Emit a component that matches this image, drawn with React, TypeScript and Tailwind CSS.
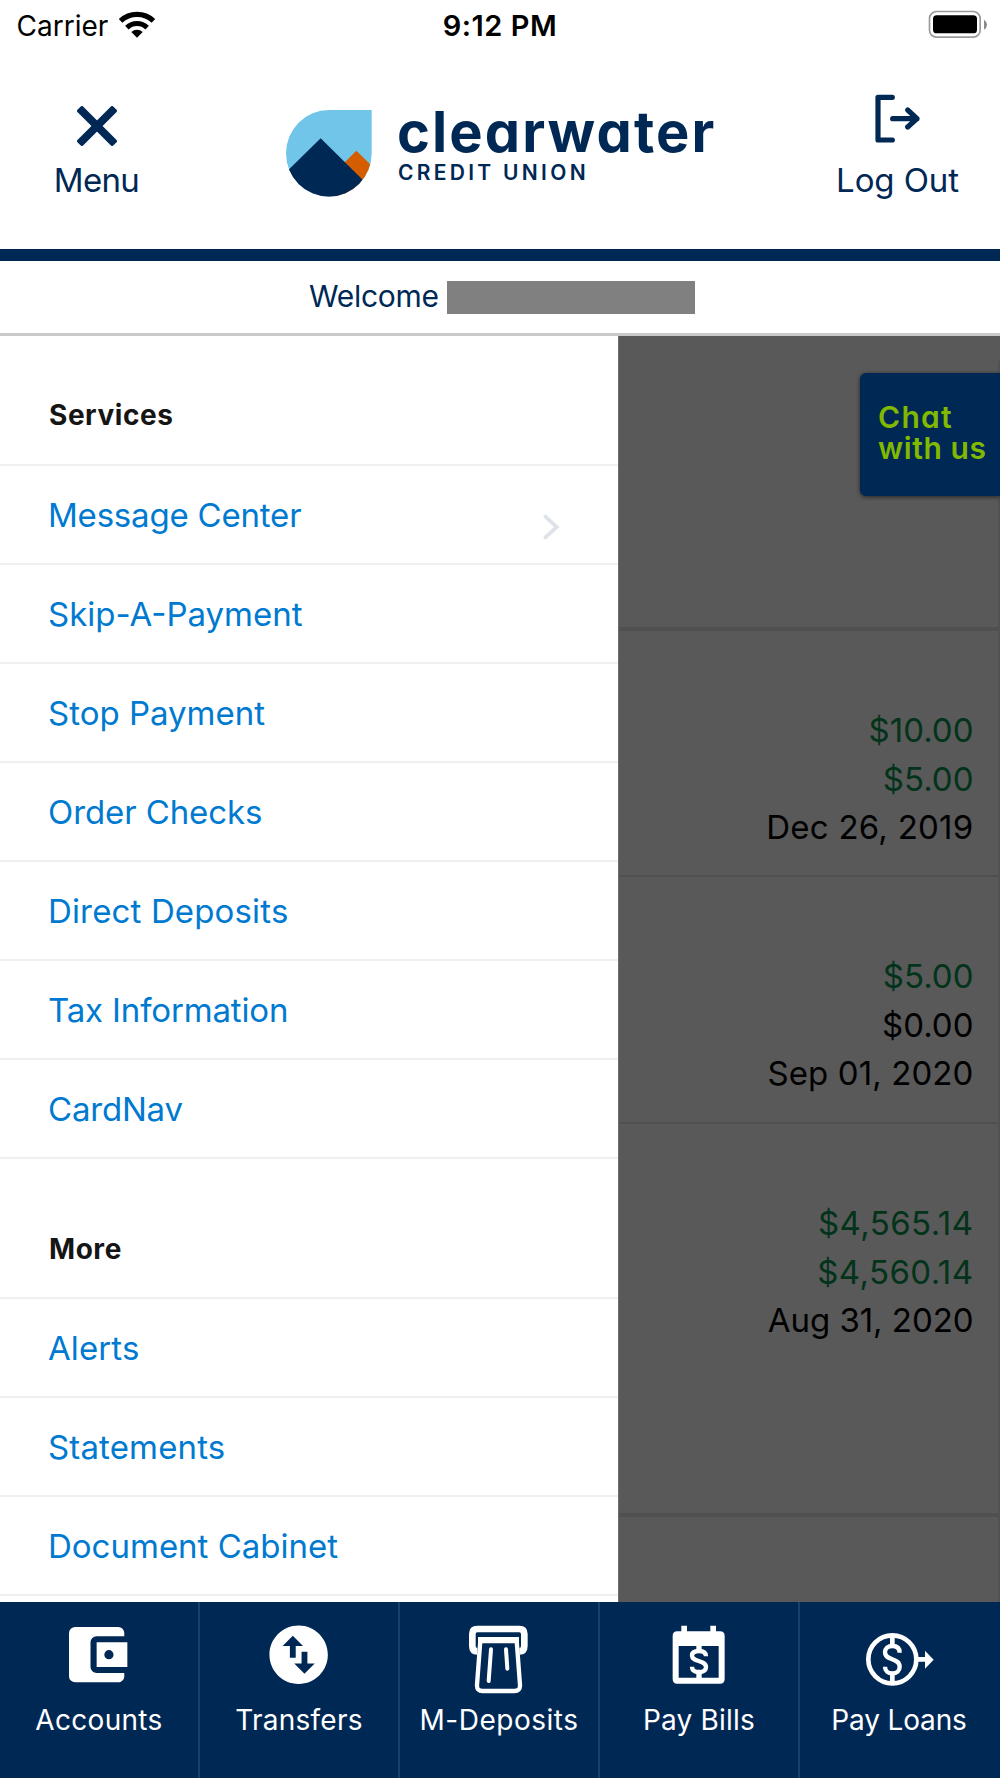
import type { ReactNode } from "react";

type Item = { label: string; tracking: string; chevron?: boolean };

const services: Item[] = [
  { label: "Message Center", tracking: "tracking-[-0.2px]", chevron: true },
  { label: "Skip-A-Payment", tracking: "tracking-[0px]" },
  { label: "Stop Payment", tracking: "tracking-[0px]" },
  { label: "Order Checks", tracking: "tracking-[-0.1px]" },
  { label: "Direct Deposits", tracking: "tracking-[0.15px]" },
  { label: "Tax Information", tracking: "tracking-[-0.15px]" },
  { label: "CardNav", tracking: "tracking-[-0.2px]" },
];

const more: Item[] = [
  { label: "Alerts", tracking: "tracking-[0.1px]" },
  { label: "Statements", tracking: "tracking-[0.15px]" },
  { label: "Document Cabinet", tracking: "tracking-[0px]" },
];

function MenuRow({ item }: { item: Item }) {
  return (
    <a className="flex h-[99px] shrink-0 items-center justify-between border-b-2 border-[#f0f0f0] pl-[48px] pr-[56px] text-[33px] leading-[40px] text-[#007ad0]">
      <span className={item.tracking}>{item.label}</span>
      {item.chevron && (
        <svg className="mt-[25px] h-7 w-5" viewBox="0 0 20 28" fill="none" stroke="#dde3e8" strokeWidth="3.8" strokeLinecap="round">
          <path d="M3.4 3.6 L14.8 14 L3.4 24.4" />
        </svg>
      )}
    </a>
  );
}

function MenuHeading({ children, tall }: { children: ReactNode; tall?: boolean }) {
  return (
    <h2
      className={
        (tall ? "h-[140px] pb-[31px]" : "h-[130px] pb-[32px]") +
        " flex shrink-0 items-end border-b-2 border-[#f0f0f0] pl-[49px] text-[28px] font-bold leading-[34px] tracking-[0.55px] text-[#151515]"
      }
    >
      {children}
    </h2>
  );
}

function Balance({ lines, className }: { lines: [string, string][]; className: string }) {
  return (
    <div className={className + " flex shrink-0 flex-col items-end border-[#505050] pr-[24.5px] pt-[75.4px] text-[33px] leading-[48.4px]"}>
      {lines.map(([text, tone], i) => (
        <span key={i} className={tone}>
          {text}
        </span>
      ))}
    </div>
  );
}

function Tab({ label, tracking, last, children }: { label: string; tracking: string; last?: boolean; children: ReactNode }) {
  return (
    <div className={(last ? "pr-[2px] " : "border-r-[2px] border-[#1b3f68] ") + "flex h-full w-[200px] flex-col items-center text-white"}>
      <svg className="h-[101px] w-[200px] shrink-0 self-start" viewBox="0 0 200 101">
        {children}
      </svg>
      <span className={tracking + " whitespace-nowrap text-[28px] leading-[34px]"}>{label}</span>
    </div>
  );
}

const green = "text-[#04331b] tracking-[0.45px]";
const greenShort = "text-[#04331b] tracking-[0px]";
const dark = "text-black tracking-[0.25px]";
const darkShort = "text-black tracking-[0px]";

export default function App() {
  return (
    <div className="flex h-[1778px] w-[1000px] flex-col overflow-hidden bg-white font-['Inter',sans-serif]">
      {/* Status bar */}
      <div className="grid h-[50px] shrink-0 grid-cols-3 items-center text-[28px] leading-[34px] text-black">
        <div className="flex items-center pl-[16.5px]">
          <span className="pt-px tracking-[0px]">Carrier</span>
          <svg className="ml-[10px] -mt-[2px] h-7 w-[38px]" viewBox="359 28 114 84" fill="none" stroke="#000">
            <path d="M366.7 60.5 A72 72 0 0 1 465.3 60.5" strokeWidth="15.5" />
            <path d="M385.5 81 A44 44 0 0 1 446.5 81" strokeWidth="15" />
            <path d="M416 111 L399 94 A25 25 0 0 1 433 94 Z" fill="#000" stroke="none" />
          </svg>
        </div>
        <div className="pt-px text-center text-[29px] font-semibold tracking-[0.5px]">9:12 PM</div>
        <div className="-mt-[2px] flex justify-end pr-[12px]">
          <svg className="h-7 w-[60px]" viewBox="774 29 180 84">
            <rect x="778.5" y="33.5" width="152" height="77" rx="21" fill="none" stroke="#9a9a9a" strokeWidth="5" />
            <rect x="789" y="45" width="132" height="54" rx="11" />
            <path d="M942 58 Q951 64 951 73 Q951 82 942 88 Z" fill="#8a8a8a" />
          </svg>
        </div>
      </div>

      {/* Brand header */}
      <header className="flex h-[211px] shrink-0 items-start border-b-[12px] border-[#002855] text-[#002855]">
        <div className="flex w-[193px] flex-col items-center pt-[56px] text-[33px]">
          <svg className="h-10 w-10" viewBox="231 318 120 120" fill="#002855">
            <rect x="215" y="366" width="152" height="24" rx="6" transform="rotate(45 291 378)" />
            <rect x="215" y="366" width="152" height="24" rx="6" transform="rotate(-45 291 378)" />
          </svg>
          <span className="mt-[16px] leading-[37px] tracking-[-0.7px]">Menu</span>
        </div>
        <div className="flex w-[602px] items-start pl-[93px] pt-[60px]">
          <svg className="h-[87px] w-[86px] shrink-0" viewBox="47 60 258 261">
            <clipPath id="drop">
              <path d="M304 60 H176 A129 130 0 0 0 176 320 A129 130 0 0 0 304 190 Z" />
            </clipPath>
            <g clipPath="url(#drop)">
              <rect x="40" y="55" width="270" height="270" fill="#71c5e8" />
              <path d="M258 182 L340 262 V330 H200 L210 230 Z" fill="#d45d00" />
              <path d="M151 145 L330 322 H-30 Z" fill="#002855" />
            </g>
          </svg>
          <div className="flex flex-col pl-[25px] font-bold [font-feature-settings:'cv11']">
            <span className="-mt-[3px] text-[56px] leading-[50px] tracking-[2.1px]">clearwater</span>
            <span className="mt-[3px] pl-[1px] text-[21px] font-semibold leading-[25px] tracking-[3.3px]">CREDIT UNION</span>
          </div>
        </div>
        <div className="flex w-[205px] flex-col items-center pt-[43px] text-[33px]">
          <svg
            className="h-[52px] w-[50px]"
            viewBox="609 280 150 156"
            fill="none"
            stroke="#002855"
            strokeWidth="15.5"
            strokeLinecap="round"
            strokeLinejoin="round"
          >
            <path d="M667 293 H624 V421 H667" />
            <path d="M668 357 H741 M713 331 L741 357 L713 382" />
          </svg>
          <span className="mt-[17px] leading-[37px] tracking-[-0.1px]">Log Out</span>
        </div>
      </header>

      {/* Greeting */}
      <div className="flex h-[75px] shrink-0 items-center border-b-[3px] border-[#c9c9c9] pl-[309px] text-[30px] leading-[36px] text-[#002855]">
        <span className="w-[138px] pb-[2px] tracking-[-0.3px]">Welcome</span>
        <span className="h-[33px] w-[248px] bg-[#808080]" />
      </div>

      {/* Drawer over dimmed accounts */}
      <main className="flex h-[1266px] shrink-0 overflow-hidden">
        <nav className="flex w-[618px] shrink-0 flex-col overflow-hidden bg-white">
          <MenuHeading>Services</MenuHeading>
          {services.map((s) => (
            <MenuRow key={s.label} item={s} />
          ))}
          <MenuHeading tall>More</MenuHeading>
          {more.map((s) => (
            <MenuRow key={s.label} item={s} />
          ))}
        </nav>
        <section className="relative flex w-[382px] flex-col border-l border-[#6e6e6e] bg-[#595959]">
          <div className="flex h-[25px] shrink-0" />
          <div className="flex grow flex-col border-r-2 border-[#515151]">
            <div className="h-[270px] shrink-0 border-b-4 border-[#505050]" />
            <Balance className="h-[246px] border-b-2" lines={[["$10.00", greenShort], ["$5.00", greenShort], ["Dec 26, 2019", dark]]} />
            <Balance className="h-[247px] border-b-2" lines={[["$5.00", greenShort], ["$0.00", darkShort], ["Sep 01, 2020", "text-black tracking-[0.1px]"]]} />
            <Balance className="h-[393px] border-b-4" lines={[["$4,565.14", green], ["$4,560.14", green], ["Aug 31, 2020", "text-black tracking-[-0.05px]"]]} />
          </div>
          <button className="absolute right-0 top-[37px] h-[123px] w-[140px] rounded-l-[6px] bg-[#002855] pb-[32px] pl-[18px] pt-[29px] text-left text-[30px] font-semibold leading-[31px] text-[#80b900] shadow-[0_1px_4px_rgba(0,0,0,0.6)] [font-feature-settings:'cv11']">
            <span className="block tracking-[1.3px]">Chat</span>
            <span className="block whitespace-nowrap tracking-[0.6px]">with us</span>
          </button>
        </section>
      </main>

      {/* Tab bar */}
      <footer className="flex h-[176px] shrink-0 bg-[#002855]">
        <Tab label="Accounts" tracking="tracking-[0.3px]">
          <path
            transform="translate(59.8 15.8) scale(3.07)"
            fill="#fff"
            d="M21 18v1c0 1.1-.9 2-2 2H5a2 2 0 0 1-2-2V5a2 2 0 0 1 2-2h14c1.1 0 2 .9 2 2v1h-9a2 2 0 0 0-2 2v8a2 2 0 0 0 2 2h9zm-9-2h10V8H12v8zm4-2.5a1.5 1.5 0 0 1 0-3 1.5 1.5 0 0 1 0 3z"
          />
        </Tab>
        <Tab label="Transfers" tracking="tracking-[0.25px]">
          <path
            transform="translate(63.6 17.7) scale(2.92)"
            fill="#fff"
            d="M12 2C6.48 2 2 6.48 2 12s4.48 10 10 10 10-4.48 10-10S17.52 2 12 2zM6.5 9L10 5.5 13.5 9H11v4H9V9H6.5zm11 6L14 18.5 10.5 15H13v-4h2v4h2.5z"
          />
        </Tab>
        <Tab label="M-Deposits" tracking="tracking-[0.5px]">
          <g transform="translate(-10 -12) scale(.33333)" fill="none" stroke="#fff" strokeWidth="12" strokeLinecap="round">
            <path d="M262 184 Q247 184 247 168 V132 Q247 117 262 117 H388 Q403 117 403 132 V168 Q403 184 388 184" strokeWidth="20" strokeLinecap="butt" />
            <path d="M264 141 H387 V160 H264 Z" fill="#fff" stroke="none" />
            <path d="M271 152 L261 285 Q260 303 278 303 H373 Q391 303 390 285 L380 152" strokeWidth="13" strokeLinecap="butt" />
            <path d="M303 178 L296 273 M348 178 L352 236" />
          </g>
        </Tab>
        <Tab label="Pay Bills" tracking="tracking-[0.2px]">
          <g transform="translate(-210 -12) scale(.33333)" fill="#fff">
            <path
              fillRule="evenodd"
              d="M874 107 h17 v17 h70 v-17 h17 v17 h12 q14 0 14 14 v129 q0 14 -14 14 h-128 q-14 0 -14 -14 v-129 q0 -14 14 -14 h12 z M866 168 v95 h120 v-95 z"
            />
            <path d="M919 165 h16 v18 h-16 z M919 246 h16 v18 h-16 z" />
            <path
              fill="none"
              stroke="#fff"
              strokeWidth="13"
              d="M948 199 C948 188 939 183 927 183 C914 183 906 188 906 197 C906 216 948 210 948 231 C948 241 940 246 927 246 C914 246 906 241 906 230"
            />
          </g>
        </Tab>
        <Tab label="Pay Loans" tracking="tracking-[-0.15px]" last>
          <g transform="translate(-10 -12) scale(.33333)" fill="none" stroke="#fff" strokeWidth="14">
            <circle cx="307" cy="208" r="72" />
            <path d="M307 140 V166 M307 252 V276 M384 208 H408" />
            <path d="M329 188 C329 174 320 168 307 168 C294 168 285 175 285 187 C285 213 329 203 329 230 C329 243 320 250 307 250 C294 250 285 243 285 230" strokeWidth="13" />
            <path d="M405 182 L431 209 L405 236 Z" fill="#fff" stroke="none" />
          </g>
        </Tab>
      </footer>
    </div>
  );
}
